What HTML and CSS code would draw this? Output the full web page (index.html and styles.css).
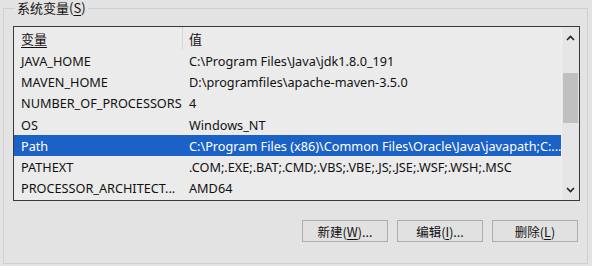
FILE: index.html
```html
<!DOCTYPE html>
<html lang="zh-CN">
<head>
<meta charset="utf-8">
<link rel="stylesheet" href="styles.css">
</head>
<body>
<fieldset class="group">
  <legend class="legend">系统变量(<u>S</u>)</legend>
  <div class="listbox">
    <div class="table">
      <div class="row head">
        <div class="cell name"><span class="ul">变量</span></div>
        <div class="cell value">值</div>
      </div>
      <div class="row"><div class="cell name">JAVA_HOME</div><div class="cell value">C:\Program Files\Java\jdk1.8.0_191</div></div>
      <div class="row"><div class="cell name">MAVEN_HOME</div><div class="cell value">D:\programfiles\apache-maven-3.5.0</div></div>
      <div class="row"><div class="cell name">NUMBER_OF_PROCESSORS</div><div class="cell value">4</div></div>
      <div class="row"><div class="cell name">OS</div><div class="cell value">Windows_NT</div></div>
      <div class="row sel"><div class="cell name">Path</div><div class="cell value">C:\Program Files (x86)\Common Files\Oracle\Java\javapath;C:...</div></div>
      <div class="row"><div class="cell name">PATHEXT</div><div class="cell value">.COM;.EXE;.BAT;.CMD;.VBS;.VBE;.JS;.JSE;.WSF;.WSH;.MSC</div></div>
      <div class="row"><div class="cell name">PROCESSOR_ARCHITECT...</div><div class="cell value">AMD64</div></div>
    </div>
    <div class="scrollbar">
      <div class="arrow">
        <svg width="9" height="6" viewBox="0 0 9 6"><path d="M1 5 L4.5 1.5 L8 5" fill="none" stroke="#222" stroke-width="1.6"/></svg>
      </div>
      <div class="track"><div class="thumb"></div></div>
      <div class="arrow">
        <svg width="9" height="6" viewBox="0 0 9 6"><path d="M1 1 L4.5 4.5 L8 1" fill="none" stroke="#222" stroke-width="1.6"/></svg>
      </div>
    </div>
  </div>
  <div class="buttons">
    <button class="btn">新建(<u>W</u>)...</button>
    <button class="btn">编辑(<u>I</u>)...</button>
    <button class="btn">删除(<u>L</u>)</button>
  </div>
</fieldset>
</body>
</html>
```
FILE: styles.css
```css
html, body {
  margin: 0;
  padding: 0;
  background: #e3e3e3;
  width: 592px;
  height: 266px;
  overflow: hidden;
}
body {
  font-family: "Noto Sans", "Noto Sans CJK SC", sans-serif;
  font-size: 12.7px;
  color: #111;
}
.group {
  margin: 0 4px 0 3px;
  padding: 10px 7px 20px 9px;
  border: 1px solid #cfcfcf;
  box-sizing: border-box;
  height: 264px;
}
.legend {
  padding: 0 2px;
  margin-left: 2px;
  font-family: "Noto Sans CJK SC", sans-serif;
  font-size: 13px;
  line-height: 16px;
  color: #111;
}
.legend u { text-decoration-thickness: 1px; text-underline-offset: 2px; }
.listbox {
  display: flex;
  width: 567px;
  height: 175px;
  box-sizing: border-box;
  border: 1px solid #3a3a3a;
  background: #ebebeb;
}
.table {
  flex: 1;
  min-width: 0;
}
.row {
  display: flex;
  height: 21.3px;
  align-items: center;
  white-space: nowrap;
}
.row.head {
  height: 23px;
}
.cell {
  padding-left: 7px;
  box-sizing: border-box;
  overflow: hidden;
}
.name { width: 169px; }
.value { flex: 1; padding-left: 6px; }
.head .name {
  border-right: 1px solid #d6d6d6;
  height: 23px;
  display: flex;
  align-items: center;
  font-family: "Noto Sans CJK SC", sans-serif;
  font-size: 13px;
}
.head .value {
  font-family: "Noto Sans CJK SC", sans-serif;
  font-size: 13px;
}
.ul {
  text-decoration: underline;
  text-decoration-thickness: 1px;
  text-underline-offset: 3px;
}
.row.sel {
  background: #1b62c7;
  color: #fff;
}
.scrollbar {
  width: 17px;
  display: flex;
  flex-direction: column;
  background: #e6e6e6;
  border-left: 1px solid #f0f0f0;
}
.arrow {
  height: 21px;
  display: flex;
  align-items: center;
  justify-content: center;
}
.track {
  flex: 1;
  padding: 25px 1px 0 1px;
}
.thumb {
  height: 50px;
  background: #c0c0c0;
}
.buttons {
  display: flex;
  justify-content: flex-end;
  gap: 9px;
  margin-top: 19px;
  margin-right: 2px;
}
.btn {
  width: 86px;
  height: 22px;
  margin: 0;
  padding: 0;
  border: 1px solid #adadad;
  background: #e1e1e1;
  font-family: "Noto Sans CJK SC", sans-serif;
  font-size: 12.5px;
  color: #111;
}
.btn u { text-underline-offset: 2px; }
```
